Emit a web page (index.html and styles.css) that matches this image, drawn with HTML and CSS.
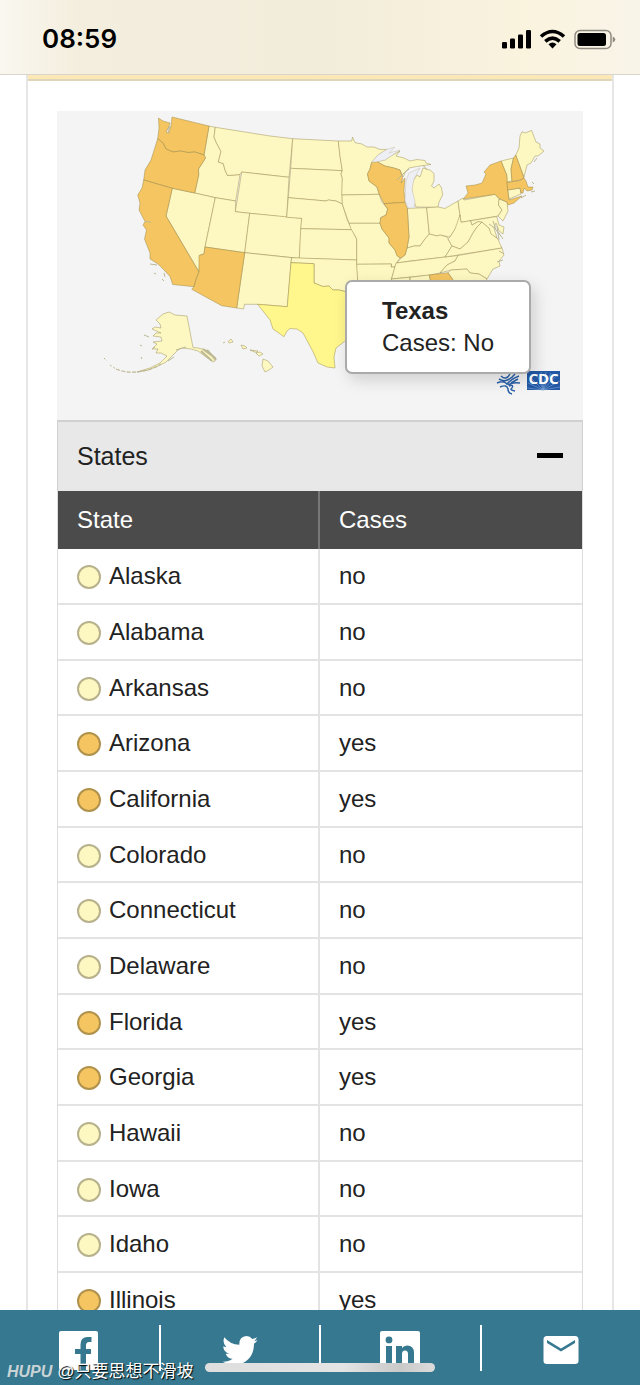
FILE: index.html
```html
<!DOCTYPE html>
<html lang="en">
<head>
	<meta charset="UTF-8">
	<meta name="viewport" content="width=device-width, initial-scale=1">
	<title>States Reporting Cases</title>

	<link rel="stylesheet" href="styles.css">
</head>
<body>

<div class="status-bar">
	<div class="time">08:59</div>
	<svg class="status-icons" viewBox="500 28 116 22" aria-hidden="true">
		<rect x="502" y="42" width="5" height="6.5" rx="1.3"/>
		<rect x="510" y="38.500" width="5" height="10" rx="1.3"/>
		<rect x="518" y="34.500" width="5" height="14" rx="1.3"/>
		<rect x="526" y="30" width="5" height="18.500" rx="1.3"/>
		<g fill="none" stroke="#000" stroke-width="3.600">
			<path d="M541 36.500Q552.500 26.500 564 36.500"/>
			<path d="M545.300 41.300Q552.500 35 559.700 41.300"/>
		</g>
		<path d="M548.500 44.200Q552.500 41 556.500 44.200L552.500 48.500Z"/>
		<rect x="575" y="30.500" width="36" height="18" rx="5" fill="none" stroke="#8f8b80" stroke-width="1.500"/>
		<rect x="577.500" y="33" width="28.500" height="13" rx="2.500"/>
		<path d="M612.700 36.500Q615.300 37.500 615.300 39.500Q615.300 41.500 612.700 42.500Z" fill="#8f8b80"/>
	</svg>
</div>

<main class="content">
	<div class="card">
		<div class="card-head"></div>
		<div class="card-body">

			<div class="map-wrap">
				<svg class="map" viewBox="57 111 526 309" role="img" aria-label="Map of states with cases">
					<g class="no">
						<!-- Idaho, Montana, Wyoming -->
						<path d="M209 126L215.300 127.300L214 137L216.500 143L221 151.500L218.300 162L223.300 163.500L225 170L227.500 175.500L234 175L240 174.500L235.700 201L215.300 197.700L194.700 193L198.700 175L198.500 169L205.500 158L204 155Z"/>
						<path d="M215.300 127.300L270 136L292.700 138.700L289 177.300L241.700 172L240 174.500L234 175L227.500 175.500L225 170L223.300 163.500L218.300 162L221 151.500L216.500 143L214 137Z"/>
						<path d="M241.700 172L289 177.300L286.700 217.300L249.700 213.300L235.300 211.700Z"/>
						<!-- Nevada, Utah, Colorado, New Mexico -->
						<path d="M172.300 188.300L194.700 193L215.300 197.700L205 247L204 254L200 255L199 272L166 216Z"/>
						<path d="M215.300 197.700L235.700 201L235.300 211.700L249.700 213.300L244.700 252.700L205 247Z"/>
						<path d="M249.700 213.300L301.700 218.300L299.300 258.300L244.700 252.700Z"/>
						<path d="M244.700 252.700L291.700 257.700L291 262.700L287.300 306.700L257.700 304.300L244.500 304.300L243.500 309L236.700 308Z"/>
						<!-- Dakotas, Nebraska, Kansas, Oklahoma -->
						<path d="M292.700 138.700L338.300 141L340 156L342.300 170.700L290.700 168.300Z"/>
						<path d="M290.700 168.300L342.300 170.700L341 174L342.300 178L342.300 204L336 201L328.300 200L326 201L288.300 197.700Z"/>
						<path d="M288.300 197.700L326 201L328.300 200L336 201L342.300 204L347.300 220L352.300 229.700L300.700 228.700L301.700 218.300L286.700 217.300Z"/>
						<path d="M300.700 228.700L352.300 229.700L354 234L356.700 239L356.700 260L299.300 258.300Z"/>
						<path d="M291.700 257.700L356.700 260L358.500 292L345 291.500L339 290L333 290L329 286L323 286.500L314 283L314 263.700L291 262.700Z"/>
						<!-- Minnesota, Iowa, Missouri, Arkansas -->
						<path d="M338.300 141L351.700 141L352.500 137L355 142.700L362 144L367 147L374 147L380 149.500L387 149.300L378 155L371.700 162.300L370 169L367.500 174L369 181L377 187L379.300 194.300L341.700 195L342.300 178L341 174L342.300 170.700L340 156Z"/>
						<path d="M342 195L379.300 194.300L381.700 201.700L387.700 209L386 215L380.700 217.700L380 223.300L349 223.300L342.300 204Z"/>
						<path d="M349 223.300L380 223.300L382 229L389 238L389 243L395 250L397 255L400 258L397 262L395 267L391 267L391.500 264L356.700 264.300L356.700 239L354 234L351 229Z"/>
						<path d="M356.700 264.300L391.500 264L391 267L395 267L391 281L389 294L358.500 294Z"/>
						<!-- Michigan -->
						<path d="M376.700 161.700L385 160L391 156L400 151L396 156L404 158L410 161L417 159.500L425 160.500L426 163L431 164.500L424 165.500L416.500 166.500L409 168L406 171L403 177L400 170L394 168L385 166Z"/>
						<path d="M423 168L430 170L434 173.500L434 181L431.500 186L434 188L439 184L441.500 188L442.700 195L439 202L438 207.300L416 207L413.500 200L411.700 189L413 181L417 175L420 177Z"/>
						<!-- Indiana, Ohio, Kentucky, Tennessee -->
						<path d="M407.300 208.300L426.700 207.700L429.300 234L425 239L420 246L414 246L407 248L409 237Z"/>
						<path d="M426.700 207.700L438 207L445 208.500L451 205L458 201L460 215L458 225L450 237L440 235L437 236L429.300 234Z"/>
						<path d="M397 263L401 258L405 255L407 248L414 246L420 246L425 239L429.300 234L437 236L440 235L447 237L452 246L445 257L410 261Z"/>
						<path d="M396 263L445 257L458 255.500L455 261L447 265L440 273L430 275L391.500 279Z"/>
						<!-- Pennsylvania, West Virginia, Virginia, Carolinas -->
						<path d="M458 201L463 198L464 200L495 194.300L499.300 199L498.500 205L502 210L498 216L461 222.300Z"/>
						<path d="M460 215L461 222.300L470.700 220.700L472 225L478 221.500L482 222L477 227L473 233L468 242L460 249L452 246L448 239L450 237L455 229Z"/>
						<path d="M445 257L452 246L460 249L468 242L473 233L477 227L482 222L489 228L492 234L498 239L500 244L502 248Z"/>
						<path d="M470.700 220.700L496.700 216.500L499 225L504 227L503 234L499 231L496 223L494 228L497 238L491 234L489 228L482 222L478 221.500L472 225Z"/>
						<path d="M458 255.500L502 248L504 255L499 261L500 266L493 269L487 279L479 274L470 273L467 269L451 270L440 273L447 265L455 261Z"/>
						<path d="M448 272.700L451 270L467 269L470 273L479 274L487 279L478 292L460 292L453 280Z"/>
						<path d="M391.500 279L410 277.300L409 294L389 294ZM410 277.300L429.300 275L433 294L409 294Z"/>
						<!-- New Jersey and New England -->
						<path d="M499 199L507 202L508 211L503 221L498 216L502 210L498.500 205Z"/>
						<path d="M501 161L513.500 158L511 169L512 181L507 182L506.700 175Z"/>
						<path d="M515.700 155L519 148L520 136L522 131.700L525 133L531.700 130.500L536 142L540 144L540 148L544 151L538 156L535 156L531 163L527 165L524 177Z"/>
						<path d="M507.700 190L520 188L521 194L509 199Z"/>
						<!-- Alaska -->
						<path d="M156 320L163 314L169 312L175 315L187 316L193 347.500L198 348L206 350L216 358L214 362L206 357L198 351L191 349L182 348L178 350L172 356L166 362L158 366L148 370L137 372L150 368L160 363L167 356L161 353L156 353L158 349L152 349L157 344L153 342L162 341L161 337L153 336L156 333L161 333L152 329L155 327L161 328L160 324Z"/>
						<!-- Hawaii -->
						<path d="M228 341.500L231 339L233 342L229 343ZM241 345L245 346L247 348L243 349ZM250 350L258 351L256 352.500ZM256 353L260 352L263 354L259 356ZM263 359L268 361L273 367L269 370L265 372L262 366Z"/>
					</g>

					<g class="yes">
						<path d="M158.500 118L163 121L170 123L168 129L166 132L169 133L171 126L172 117L209 126L204 155L195 152L188 152.500L180 151L173 152L166 149L163 143L157.700 138.700L159 128Z"/>
						<path d="M157.700 138.700L163 143L166 149L173 152L180 151L188 152.500L195 152L204 155L205.500 158L198.500 169L198.700 175L194.700 193L172.300 188.300L143.700 180L145 170L151 160Z"/>
						<path d="M143.700 180L172.300 188.300L166 216L199 272L196.500 278L194 286.700L172.700 284.500L170 276.500L164 270L158 264L150 259L150 253L144.500 239L146.500 230L143 225L145 221.500L139 210L140 203L137.700 195L142 188Z"/>
						<path d="M205 247L244.700 252.700L236.700 308L221.700 305.700L191.700 289.300L194 286.700L196.500 278L199 272L199 255.500L204 254Z"/>
						<path d="M371.700 162.300L376.700 161.700L385 166L394 168L400 170L402.700 178.300L401 183L405 178L404 190L405 202.300L384 203.700L379.300 194.300L377 187L369 181L367.500 174L370 169Z"/>
						<path d="M384 203.700L405 202.300L407.300 208.300L409 237L407 248L405 255L401 258L397 256L395 250L389 243L389 238L382 229L380 223.300L380.700 217.700L386 215L387.700 209Z"/>
						<path d="M463.300 199L468 193L466 186L475 185L482 183L486 174L484 172L490 165L501 161L506.700 175L507.700 190L509 200L522 196L514 203L508 205L507 202L499 198.500L495 194.300Z"/>
						<path d="M515.700 155L520 167L524 178L520 180L512 181.500L511 169L513.500 158Z"/>
						<path d="M507 182.500L520 180.500L524 178L526 181L528 187L533 187L532 190L527 191L524 188L523 193L521 193L520 188L507.700 190Z"/>
						<path d="M429.300 275L448 272.700L453 280L463 294L433 294Z"/>
					</g>

					<path class="current" d="M291 262.700L314 263.700L314 283L323 286.500L329 286L333 290L339 290L345 291.500L358 294L360 330L350 339L345 341L336 348L334 357L335 368L327 367L318 363L313 351.700L303 333L297 329L290 328.500L287 331L284 336.700L273 329L270 320L257.700 304.300L287.300 306.700Z"/>

					<!-- coast details and islands -->
					<g class="coast">
						<path d="M167 130L169 127M170 126L168 133M145 221.500L151 222M150 264L157 265M154 273L156 274M164 273L165 277M162 279L164 281"/>
						<path d="M104 358L107 361M110 365L116 369" stroke-dasharray="2 2"/>
						<path d="M116 369Q126 373 137 372Q150 371 161 364" stroke-dasharray="4 1.500" stroke-width="1.200"/>
						<path d="M144 335L149 337M140 345L142 346M141 357L142 359M152 349L155 347M168 361L174 357M176 350L186 347"/>
						<path d="M203 349L215 358M201 351L212 361M207 350L216 360" stroke-width="2"/>
						<path d="M223 343L225 342M534 184L532 182M531 192L535 191M521 198L526 195M534 162L537 158M493 221L496 230L500 235M497 226L499 240M498 232L503 239M499 251L504 254M497 262L503 260M489 224L496 229"/>
						<path d="M397 180L404 173L409 169M423 165L427 170"/>
					</g>
					<path class="lake" d="M420 168L409 173L406 181L405 200L408 208L414 208L415 202L412 189L414 179Z"/>
					<path class="lake" d="M371.700 162.300L378 155L387 149.300L395 147L389 153L400 150L391 156L385 160L376.700 161.700Z"/>

					<!-- HHS eagle -->
					<g class="hhs">
						<path d="M497 383Q504 380 507 384Q511 379 519 376M499 379Q507 384 515 374M501 376Q506 381 510 374M508 385Q512 382 520 383M500 387Q507 384 508 389Q508 393 512 394M509 386Q514 384 512 388Q509 390 515 391M511 383L518 379"/>
					</g>
					<!-- CDC mark -->
					<rect x="527" y="371" width="33" height="19" fill="#2258a5"/>
					<path class="rays" d="M543 390L527 388M543 390L528 383M543 390L531 378M543 390L537 374M543 390L541 372M543 390L546 372M543 390L551 373M543 390L556 376M543 390L560 381M543 390L560 387"/>
					<text class="cdc" x="543.500" y="384" text-anchor="middle">CDC</text>
				</svg>

				<div class="tooltip">
					<strong>Texas</strong>
					<div>Cases: No</div>
				</div>
			</div>

			<button class="toggle" type="button" aria-expanded="true">
				<span>States</span>
				<span class="minus"></span>
			</button>

			<table class="states">
				<thead>
					<tr><th scope="col">State</th><th scope="col">Cases</th></tr>
				</thead>
				<tbody>
					<tr><td><span class="dot"></span>Alaska</td><td>no</td></tr>
					<tr><td><span class="dot"></span>Alabama</td><td>no</td></tr>
					<tr><td><span class="dot"></span>Arkansas</td><td>no</td></tr>
					<tr><td><span class="dot dot-yes"></span>Arizona</td><td>yes</td></tr>
					<tr><td><span class="dot dot-yes"></span>California</td><td>yes</td></tr>
					<tr><td><span class="dot"></span>Colorado</td><td>no</td></tr>
					<tr><td><span class="dot"></span>Connecticut</td><td>no</td></tr>
					<tr><td><span class="dot"></span>Delaware</td><td>no</td></tr>
					<tr><td><span class="dot dot-yes"></span>Florida</td><td>yes</td></tr>
					<tr><td><span class="dot dot-yes"></span>Georgia</td><td>yes</td></tr>
					<tr><td><span class="dot"></span>Hawaii</td><td>no</td></tr>
					<tr><td><span class="dot"></span>Iowa</td><td>no</td></tr>
					<tr><td><span class="dot"></span>Idaho</td><td>no</td></tr>
					<tr><td><span class="dot dot-yes"></span>Illinois</td><td>yes</td></tr>
				</tbody>
			</table>

		</div>
	</div>
</main>

<footer class="share-bar">
	<a href="#" aria-label="Facebook">
		<svg viewBox="0 0 40 40">
			<path fill-rule="evenodd" d="M2 0H37Q39 0 39 2V37Q39 39 37 39H27V23H32V18H27V14.500Q27 11 30 11H32.500V6H28.500Q21.500 6 21.500 13.500V18H16V23H21.500V39H2Q0 39 0 37V2Q0 0 2 0Z"/>
		</svg>
	</a>
	<a href="#" aria-label="Twitter">
		<svg viewBox="0 0 40 40">
			<path d="M37.500 9Q36 10 34 10.300Q36.300 8.500 37 6.300Q34.800 7.600 32.300 8Q30 5 26.500 5Q19 5.500 19.300 13.800Q10 13.500 4.300 6.300Q2 12 6.500 16.300Q4.600 16 3.200 15.300Q3.500 21 9 22.700Q7.200 23 5.700 22.700Q7.500 27.500 12.700 27.800Q8.500 31 2.500 30.800Q12 36.500 22 32.500Q34 27 34 12.800Q36.500 11 37.500 9Z"/>
		</svg>
	</a>
	<a href="#" aria-label="LinkedIn">
		<svg viewBox="0 0 40 40">
			<path fill-rule="evenodd" d="M2 0H38Q40 0 40 2V37Q40 39 38 39H2Q0 39 0 37V2Q0 0 2 0ZM6 15H12V33H6ZM9 5.500A3.400 3.400 0 1 0 9 12.300A3.400 3.400 0 1 0 9 5.500ZM16 15V33H22V23Q22 19.500 25 19.500Q28 19.500 28 23V33H34V22Q34 14.500 27 14.500Q24 14.500 22 17V15Z"/>
		</svg>
	</a>
	<a href="#" aria-label="Email">
		<svg viewBox="0 0 40 40">
			<path fill-rule="evenodd" d="M6 5H34Q37.500 5 37.500 8.500V30Q37.500 33 34 33H6Q2.500 33 2.500 30V8.500Q2.500 5 6 5ZM6 9V12L20 20.500L34 12V9L20 17.500Z"/>
		</svg>
	</a>
	<div class="home-indicator"></div>
	<div class="watermark"><b>HUPU</b> <span>@只要思想不滑坡</span></div>
</footer>

</body>
</html>
```
FILE: styles.css
```css
html, body {
	height: 100%;
	margin: 0;
}

body {
	display: flex;
	flex-direction: column;
	background: #fff;
	color: #222;
	font-family: "Liberation Sans", Arial, sans-serif;
	font-size: 24px;
	line-height: 32px;
}

* {
	box-sizing: border-box;
}

/* phone status bar */
.status-bar {
	display: flex;
	flex: none;
	align-items: center;
	justify-content: space-between;
	height: 75px;
	padding: 4px 24px 0 42px;
	border-bottom: 1px solid #d9d5ca;
	background: linear-gradient(90deg, #f9f7f0 0, #f4eede 12%, #f2ecdb 50%, #faf3de 82%, #f8f4e8 100%);
}

.time {
	color: #000;
	font-family: Inter, "Liberation Sans", sans-serif;
	font-size: 26px;
	font-weight: 600;
}

.status-icons {
	width: 116px;
	height: 22px;
}

/* page */
.content {
	flex: 1;
	min-height: 0;
	overflow: auto;
	scrollbar-width: none;
}

.card {
	margin: 0 26px;
	border: solid #e6e6e6;
	border-width: 0 2px;
}

.card-head {
	height: 6px;
	border-bottom: 2px solid #dfd6b8;
	background: #fbe8b6;
}

.card-body {
	padding: 30px 29px 0;
}

/* map */
.map-wrap {
	position: relative;
	background: #f4f4f4;
}

.map {
	display: block;
	width: 100%;
}

.no,
.yes,
.current {
	stroke: #8c7d3c;
	stroke-opacity: .6;
	stroke-width: .7;
	stroke-linejoin: round;
}

.no {
	fill: #fdf7c1;
}

.yes {
	fill: #f4c561;
}

.current {
	fill: #fff68c;
}

.coast {
	fill: none;
	stroke: #bcb894;
}

.lake {
	fill: #eeeef5;
	stroke: #c4c1ad;
	stroke-width: .5;
}

.hhs {
	fill: none;
	stroke: #2b62a9;
	stroke-width: 1.5;
}

.rays {
	stroke: #7fa3d3;
	stroke-width: .6;
}

.cdc {
	fill: #fff;
	font-family: "Noto Sans", sans-serif;
	font-size: 15px;
	font-weight: 700;
}

.tooltip {
	position: absolute;
	top: 169px;
	left: 288px;
	padding: 13px 35px;
	border: 2px solid #aaa;
	border-radius: 7px;
	background: #fff;
	box-shadow: 4px 6px 16px rgba(0, 0, 0, .15);
}

/* accordion heading */
.toggle {
	display: flex;
	align-items: center;
	justify-content: space-between;
	width: 100%;
	height: 71px;
	padding: 0 19px 2px;
	border: 1px solid #d0d0d0;
	border-width: 2px 1px 0;
	background: #e8e8e8;
	color: #222;
	font: inherit;
	font-size: 25px;
}

.minus {
	width: 26px;
	height: 5px;
	background: #000;
}

/* table */
.states {
	width: 100%;
	border: 1px solid #ddd;
	border-width: 0 1px;
	border-spacing: 0;
	table-layout: fixed;
}

.states th,
.states td {
	height: 56px;
	padding: 0 19px;
	border-bottom: 2px solid #e3e3e3;
	text-align: left;
}

.states th {
	height: 58px;
	border-bottom: 0;
	background: #4b4b4b;
	color: #fff;
	font-weight: 400;
}

.states tbody tr:nth-child(3n) td {
	height: 55px;
}

.states th:first-child {
	border-right: 2px solid #777;
}

.states td:first-child {
	border-right: 2px solid #e3e3e3;
}

.dot {
	display: inline-block;
	width: 24px;
	height: 24px;
	margin-right: 8px;
	border: 2px solid #b7b18c;
	border-radius: 50%;
	background: #fdf7c1;
	vertical-align: -5px;
}

.dot-yes {
	border-color: #b0924c;
	background: #f4c561;
}

/* share links */
.share-bar {
	position: relative;
	display: flex;
	flex: none;
	height: 75px;
	padding: 15px 0 14px;
	background: #36788f;
}

.share-bar a {
	display: flex;
	flex: 1;
	justify-content: center;
	padding-top: 6px;
}

.share-bar a + a {
	border-left: 2px solid #fff;
}

.share-bar svg {
	width: 40px;
	height: 40px;
	fill: #fff;
}

.home-indicator {
	position: absolute;
	bottom: 13px;
	left: 50%;
	width: 230px;
	height: 9px;
	margin-left: -115px;
	border-radius: 5px;
	background: linear-gradient(90deg, #dedede 0, #e4e4e4 60%, #c9c9c9 85%, #dcdcdc 100%);
}

.watermark {
	position: absolute;
	bottom: 3px;
	left: 7px;
	display: flex;
	align-items: center;
	gap: 5px;
	color: #fff;
	font-family: "Liberation Sans", "Noto Sans CJK SC", sans-serif;
	font-size: 17px;
	line-height: 20px;
	text-shadow: 1px 1px 1px #000;
}

.watermark b {
	color: #c9d3d6;
	font-size: 16px;
	font-style: italic;
	text-shadow: none;
}
```
